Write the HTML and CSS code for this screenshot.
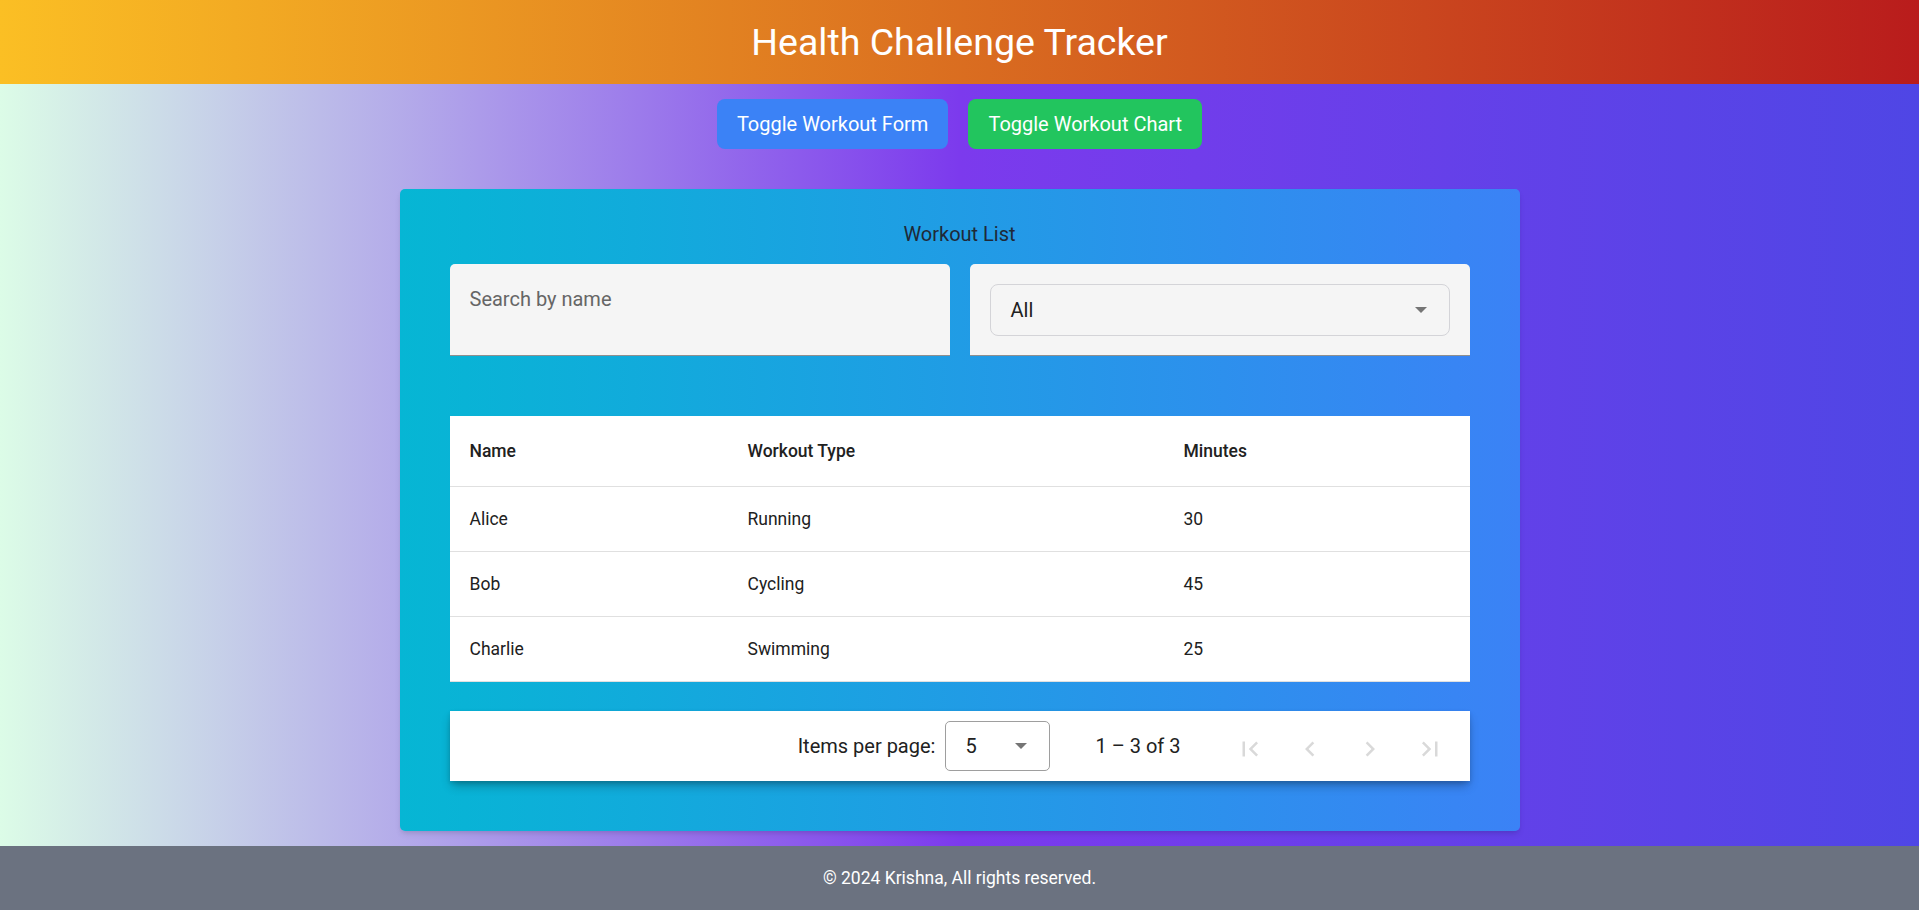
FILE: index.html
```html
<!DOCTYPE html>
<html lang="en">
<head>
<meta charset="utf-8">
<title>Health Challenge Tracker</title>
<link rel="stylesheet" href="styles.css">
</head>
<body>
<header class="app-header">
  <h1 class="app-title">Health Challenge Tracker</h1>
</header>
<main class="app-main">
  <div class="toggle-bar">
    <button class="btn btn-blue" type="button">Toggle Workout Form</button>
    <button class="btn btn-green" type="button">Toggle Workout Chart</button>
  </div>
  <section class="card">
    <h2 class="card-title">Workout List</h2>
    <div class="filters">
      <div class="fill-field">
        <input class="search-input" type="text" placeholder="Search by name">
      </div>
      <div class="fill-field">
        <div class="outline-select">
          <span class="select-value">All</span>
          <svg class="select-arrow" width="12" height="6" viewBox="0 0 12 6"><path d="M0 0h12L6 6z" fill="#757575"/></svg>
        </div>
      </div>
    </div>
    <table class="workout-table">
      <colgroup>
        <col class="col-name">
        <col class="col-type">
        <col class="col-min">
      </colgroup>
      <thead>
        <tr><th>Name</th><th>Workout Type</th><th>Minutes</th></tr>
      </thead>
      <tbody>
        <tr><td>Alice</td><td>Running</td><td>30</td></tr>
        <tr><td>Bob</td><td>Cycling</td><td>45</td></tr>
        <tr><td>Charlie</td><td>Swimming</td><td>25</td></tr>
      </tbody>
    </table>
    <div class="paginator">
      <span class="pg-label">Items per page:</span>
      <div class="pg-select">
        <span class="select-value">5</span>
        <svg class="select-arrow" width="12" height="6" viewBox="0 0 12 6"><path d="M0 0h12L6 6z" fill="#757575"/></svg>
      </div>
      <span class="pg-range">1 – 3 of 3</span>
      <div class="pg-buttons">
        <button class="pg-btn" type="button" aria-label="First page"><svg viewBox="0 0 24 24" width="30" height="30"><path d="M18.41 16.59L13.82 12l4.59-4.59L17 6l-6 6 6 6zM6 6h2v12H6z"/></svg></button>
        <button class="pg-btn" type="button" aria-label="Previous page"><svg viewBox="0 0 24 24" width="30" height="30"><path d="M15.41 7.41L14 6l-6 6 6 6 1.41-1.41L10.83 12z"/></svg></button>
        <button class="pg-btn" type="button" aria-label="Next page"><svg viewBox="0 0 24 24" width="30" height="30"><path d="M10 6L8.59 7.41 13.17 12l-4.58 4.59L10 18l6-6z"/></svg></button>
        <button class="pg-btn" type="button" aria-label="Last page"><svg viewBox="0 0 24 24" width="30" height="30"><path d="M5.59 7.41L10.18 12l-4.59 4.59L7 18l6-6-6-6zM16 6h2v12h-2z"/></svg></button>
      </div>
    </div>
  </section>
</main>
<footer class="app-footer">© 2024 Krishna, All rights reserved.</footer>
</body>
</html>
```

FILE: styles.css
```css
* { box-sizing: border-box; }

html, body { margin: 0; padding: 0; }

body {
  font-family: Roboto, "Liberation Sans", Arial, sans-serif;
  background: linear-gradient(to right, #dcfce7, #7c3aed 50%, #4f46e5);
  min-height: 100vh;
  display: flex;
  flex-direction: column;
  color: #212121;
}

.app-header {
  height: 84px;
  background: linear-gradient(to right, #fbbf24, #b91c1c);
  display: flex;
  align-items: center;
  justify-content: center;
}

.app-title {
  margin: 0;
  color: #fff;
  font-size: 37.5px;
  font-weight: 400;
  line-height: 45px;
}

.app-main {
  flex: 1;
  padding-bottom: 15px;
}

.toggle-bar {
  display: flex;
  justify-content: center;
  gap: 20px;
  margin-top: 15px;
}

.btn {
  height: 50px;
  padding: 0 20px;
  border: none;
  border-radius: 8px;
  color: #fff;
  font-family: inherit;
  font-size: 20px;
  font-weight: 400;
  cursor: pointer;
}
.btn-blue { background: #3b82f6; }
.btn-green { background: #22c55e; }

.card {
  width: 1120px;
  margin: 40px auto 0;
  padding: 30px 50px 50px;
  border-radius: 5px;
  background: linear-gradient(to right, #06b6d4, #3b82f6);
  box-shadow: 0 4px 6px -1px rgba(0,0,0,.1), 0 2px 4px -2px rgba(0,0,0,.1);
}

.card-title {
  margin: 0 0 15px;
  text-align: center;
  font-size: 20px;
  font-weight: 400;
  line-height: 30px;
  color: #1f2937;
}

.filters {
  display: grid;
  grid-template-columns: 1fr 1fr;
  gap: 20px;
}

.fill-field {
  background: #f5f5f5;
  border-radius: 5px 5px 0 0;
  border-bottom: 1px solid #8f8f8f;
  padding: 20px 20px 18px;
  height: 92px;
}

.search-input {
  display: block;
  width: 100%;
  border: none;
  outline: none;
  background: transparent;
  padding: 0;
  font-family: inherit;
  font-size: 20px;
  line-height: 30px;
  height: 30px;
  color: #212121;
}
.search-input::placeholder { color: #666; }

.outline-select {
  height: 52px;
  border: 1px solid #d4d4d8;
  border-radius: 8px;
  display: flex;
  align-items: center;
  justify-content: space-between;
  padding: 0 22px 0 20px;
}

.select-value {
  font-size: 20px;
  color: #212121;
}

.workout-table {
  width: 100%;
  margin-top: 60px;
  border-collapse: collapse;
  background: #fff;
  table-layout: fixed;
}
.col-name { width: 278px; }
.col-type { width: 436px; }
.col-min { width: 306px; }

.workout-table th,
.workout-table td {
  text-align: left;
  padding: 0 20px;
  font-size: 17.5px;
  color: #212121;
  border-bottom: 1px solid #e0e0e0;
}
.workout-table th {
  height: 70px;
  font-weight: 500;
}
.workout-table td {
  height: 65px;
  font-weight: 400;
}

.paginator {
  margin-top: 29px;
  height: 70px;
  background: #fff;
  display: flex;
  align-items: center;
  justify-content: flex-end;
  padding-right: 10px;
  box-shadow: 0 6px 10px -2px rgba(0,0,0,.3), 0 2px 4px rgba(0,0,0,.12);
}

.pg-label {
  font-size: 20px;
  color: #212121;
}

.pg-select {
  margin-left: 10px;
  width: 105px;
  height: 50px;
  border: 1px solid #9e9e9e;
  border-radius: 5px;
  display: flex;
  align-items: center;
  justify-content: space-between;
  padding: 0 22px 0 19px;
}

.pg-range {
  margin-left: 45px;
  margin-right: 39px;
  font-size: 20px;
  color: #212121;
}

.pg-buttons {
  display: flex;
}

.pg-btn {
  width: 60px;
  height: 60px;
  border: none;
  background: transparent;
  padding: 0;
  display: flex;
  align-items: center;
  justify-content: center;
  fill: #d9d9d9;
  margin-top: 6px;
}

.app-footer {
  height: 64px;
  background: #6b7280;
  color: #fff;
  font-size: 17.5px;
  display: flex;
  align-items: center;
  justify-content: center;
}
```
